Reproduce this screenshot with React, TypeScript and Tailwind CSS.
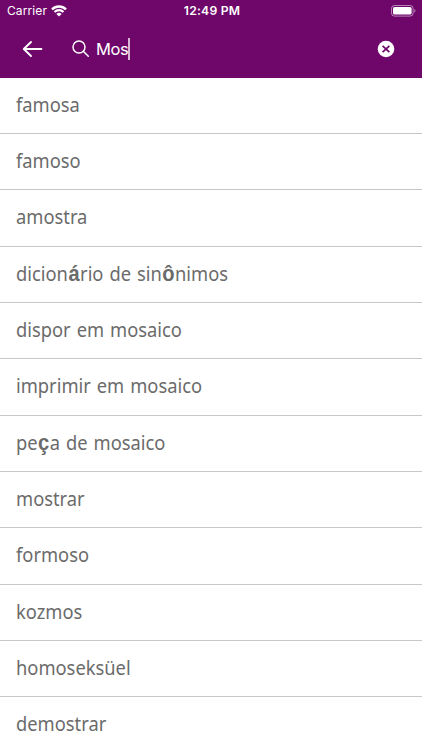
import React from 'react'

type Part = { text: string; bold?: boolean }

const results: Part[][] = [
  [{ text: 'famosa' }],
  [{ text: 'famoso' }],
  [{ text: 'amostra' }],
  [
    { text: 'dicion' },
    { text: 'á', bold: true },
    { text: 'rio de sin' },
    { text: 'ô', bold: true },
    { text: 'nimos' },
  ],
  [{ text: 'dispor em mosaico' }],
  [{ text: 'imprimir em mosaico' }],
  [{ text: 'pe' }, { text: 'ç', bold: true }, { text: 'a de mosaico' }],
  [{ text: 'mostrar' }],
  [{ text: 'formoso' }],
  [{ text: 'kozmos' }],
  [{ text: 'homoseksüel' }],
  [{ text: 'demostrar' }],
]

const WifiIcon = () => (
  <svg width="16" height="12" viewBox="0 0 16 12" fill="none">
    <path d="M1 4.4a9.9 9.9 0 0 1 14 0" stroke="white" strokeWidth="2.3" />
    <path d="M3.5 7a6.4 6.4 0 0 1 9 0" stroke="white" strokeWidth="2.1" />
    <path d="M8 11.6 5.4 9a3.7 3.7 0 0 1 5.2 0Z" fill="white" />
  </svg>
)

const BatteryIcon = () => (
  <svg width="26" height="12" viewBox="0 0 26 12" fill="none">
    <rect x="0.5" y="0.5" width="21.6" height="10.6" rx="3" stroke="white" strokeOpacity="0.5" />
    <rect x="2" y="2" width="18.6" height="7.6" rx="1.6" fill="white" />
    <path d="M23.4 4v3.8c1.4-.6 1.4-3.2 0-3.8Z" fill="white" fillOpacity="0.55" />
  </svg>
)

const StatusBar = () => (
  <div className="grid h-[21px] grid-cols-[1fr_auto_1fr] items-center pl-[7px] pr-[5px] text-[12px] leading-[21px]">
    <div className="flex items-center gap-[4px]">
      <span className="tracking-[0.1px]">Carrier</span>
      <WifiIcon />
    </div>
    <span className="text-[12.2px] font-semibold tracking-[0.2px]">12:49 PM</span>
    <div className="flex justify-end">
      <BatteryIcon />
    </div>
  </div>
)

const SearchBar = () => (
  <div className="flex h-[55px] items-center pl-[22px] pr-[27px]">
    <button type="button" aria-label="Back">
      <svg width="21" height="18" viewBox="0 0 21 18" fill="none" stroke="white" strokeWidth="1.9" strokeLinecap="round" strokeLinejoin="round">
        <path d="M19.4 9H2M9 2 1.8 9 9 16" />
      </svg>
    </button>
    <div className="ml-[29px] flex flex-1 items-center">
      <svg width="18" height="18" viewBox="0 0 18 18" fill="none" stroke="white" strokeWidth="1.5" strokeLinecap="round">
        <circle cx="7" cy="7" r="6" />
        <path d="m11.5 11.5 4.8 4.8" />
      </svg>
      <span className="ml-[6px] text-[16.5px] leading-[22px] tracking-[-0.4px]">Mos</span>
      <span className="h-[22px] w-[2px] bg-[#d9b8d8]" />
    </div>
    <button type="button" aria-label="Clear">
      <svg width="18" height="18" viewBox="0 0 18 18" fill="none">
        <circle cx="9" cy="9" r="8.3" fill="white" />
        <path d="m5.6 5.8 6.8 6.4M12.4 5.8l-6.8 6.4" stroke="#6f076b" strokeWidth="1.7" />
      </svg>
    </button>
  </div>
)

const App = () => {
  return (
    <div className="h-[750px] overflow-hidden bg-white">
      <header className="h-[77.6px] bg-[#6f076b] font-['Inter',sans-serif] text-white">
        <StatusBar />
        <SearchBar />
      </header>
      <ul>
        {results.map((parts, i) => (
          <li key={i} className="flex h-[56.33px] items-center border-b border-[#c8c8c8] pb-px pl-[15.8px]">
            <span className="origin-left scale-x-[0.916] whitespace-pre font-['Noto_Sans',sans-serif] text-[20px] leading-[28px] text-[#6b6b6b] [word-spacing:1.3px]">
              {parts.map((part, j) =>
                part.bold ? (
                  <b key={j} className="mx-[0.5px] font-['Liberation_Sans',sans-serif] text-[22px] font-bold leading-none">{part.text}</b>
                ) : (
                  <React.Fragment key={j}>{part.text}</React.Fragment>
                )
              )}
            </span>
          </li>
        ))}
      </ul>
    </div>
  )
}

export default App
